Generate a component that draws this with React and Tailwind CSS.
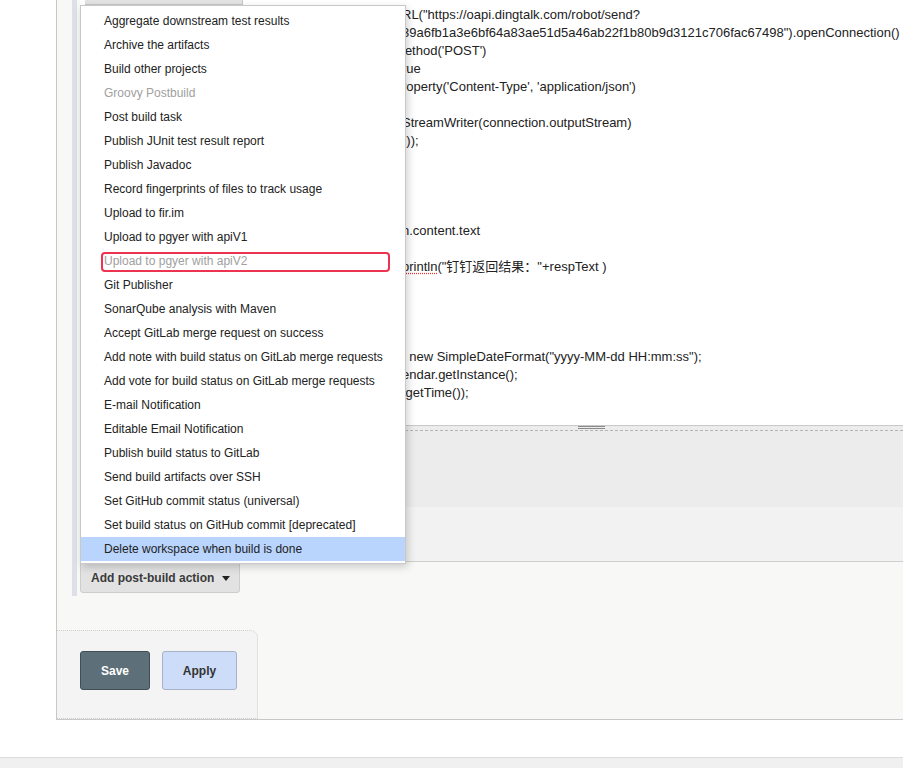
import React from "react";

const menuItems = [
  { label: "Aggregate downstream test results" },
  { label: "Archive the artifacts" },
  { label: "Build other projects" },
  { label: "Groovy Postbuild", disabled: true },
  { label: "Post build task" },
  { label: "Publish JUnit test result report" },
  { label: "Publish Javadoc" },
  { label: "Record fingerprints of files to track usage" },
  { label: "Upload to fir.im" },
  { label: "Upload to pgyer with apiV1" },
  { label: "Upload to pgyer with apiV2", disabled: true, marked: true },
  { label: "Git Publisher" },
  { label: "SonarQube analysis with Maven" },
  { label: "Accept GitLab merge request on success" },
  { label: "Add note with build status on GitLab merge requests" },
  { label: "Add vote for build status on GitLab merge requests" },
  { label: "E-mail Notification" },
  { label: "Editable Email Notification" },
  { label: "Publish build status to GitLab" },
  { label: "Send build artifacts over SSH" },
  { label: "Set GitHub commit status (universal)" },
  { label: "Set build status on GitHub commit [deprecated]" },
  { label: "Delete workspace when build is done", active: true },
];

// only the tail of each script line shows to the right of the open menu
const codeLines = [
  "RL(\"https://oapi.dingtalk.com/robot/send?",
  "39a6fb1a3e6bf64a83ae51d5a46ab22f1b80b9d3121c706fac67498\").openConnection()",
  "lethod('POST')",
  "rue",
  "roperty('Content-Type', 'application/json')",
  "",
  "StreamWriter(connection.outputStream)",
  ")));",
  "",
  "",
  "",
  "",
  "n.content.text",
  "",
  "println(\"钉钉返回结果：\"+respText )",
  "",
  "",
  "",
  "",
  "  new SimpleDateFormat(\"yyyy-MM-dd HH:mm:ss\");",
  "endar.getInstance();",
  " getTime());",
];

const font = { fontFamily: '"Liberation Sans", Arial, "Noto Sans CJK SC", sans-serif' };

const PostBuildMenu = () => (
  <div className="absolute left-[80px] top-[5px] w-[326px] bg-white border border-[#c8c8c8] shadow-[2px_3px_8px_rgba(0,0,0,0.18)] pt-[3px] pb-[2px]">
    {menuItems.map((item) => (
      <div
        key={item.label}
        className={`relative h-6 flex items-center pl-[23px] text-[12px] ${
          item.active ? "bg-[#b9d4fd] text-[#222]" : ""
        } ${item.disabled ? "text-[#a0a0a0]" : "text-[#222]"}`}
      >
        {item.label}
        {item.marked && (
          <span className="absolute left-[20px] top-[3px] w-[289px] h-[20px] border-2 border-[#ec3350] rounded-[4px]" />
        )}
      </div>
    ))}
  </div>
);

export default function App() {
  return (
    <div className="relative w-full h-[768px] bg-white overflow-hidden" style={font}>
      <div className="ml-[56px] h-[720px] border-l border-b border-[#c8c8c8] bg-[#f8f8f7] flex flex-col">
        <div className="flex pl-[15px]">
          <div className="w-[5px] h-[596px] bg-[#dde1e7]" />
          <div className="ml-[3px] flex-1 flex flex-col">
            <div className="bg-white h-[426px] border-b border-[#c9c9c9]">
              <div className="h-[5px] flex">
                <div className="ml-[5px] w-[158px] h-[5px] bg-[#e3e3e3] border-r border-b border-[#c8c8c8]" />
              </div>
              <div className="pt-[1px] pl-[322px] text-[13px] leading-[18px] text-[#222] whitespace-pre">
                {codeLines.map((line, i) => (
                  <div key={i} className="h-[18px]">
                    {line.startsWith("println") ? (
                      <>
                        <span className="underline decoration-dotted decoration-[#e33] underline-offset-2">println</span>
                        {line.slice(7)}
                      </>
                    ) : (
                      line
                    )}
                  </div>
                ))}
              </div>
            </div>
            <div className="h-[5px] bg-[#ececec] border-b border-dashed border-[#b5b5b5] flex justify-center">
              <div className="ml-[200px] w-[27px] h-[3px] border-t border-b border-[#8a8a8a]" />
            </div>
            <div className="h-[76px] bg-[#ececec]" />
            <div className="h-[55px] bg-[#f2f2f2] border-b border-[#cfcfcf]" />
            <div className="pt-[1px]">
              <button className="h-[30px] pl-[10px] pr-[9px] flex items-center gap-[8px] bg-[#e2e2e2] border border-[#cdcdcd] rounded-b-[3px] text-[12px] font-bold text-[#3a3a3a]">
                Add post-build action
                <svg width="8" height="5" viewBox="0 0 8 5">
                  <path d="M0 0h8L4 5z" fill="#222" />
                </svg>
              </button>
            </div>
          </div>
        </div>
        <div className="mt-auto">
          <div className="w-[201px] h-[89px] bg-[#f4f4f4] border-t border-r border-[#cfcfcf] rounded-tr-[8px] border-b border-dotted flex items-start gap-[12px] pt-[20px] pl-[23px]">
            <button className="w-[70px] h-[39px] bg-[#5d707a] border border-[#3f4d55] rounded-[3px] text-[12px] font-bold text-white">
              Save
            </button>
            <button className="w-[75px] h-[39px] bg-[#cddcf8] border border-[#a6b2c6] rounded-[3px] text-[12px] font-bold text-[#333]">
              Apply
            </button>
          </div>
        </div>
      </div>
      <div className="h-[37px]" />
      <div className="h-[11px] border-t border-[#dcdcdc] bg-[#f0f0f0]" />
      <PostBuildMenu />
    </div>
  );
}
